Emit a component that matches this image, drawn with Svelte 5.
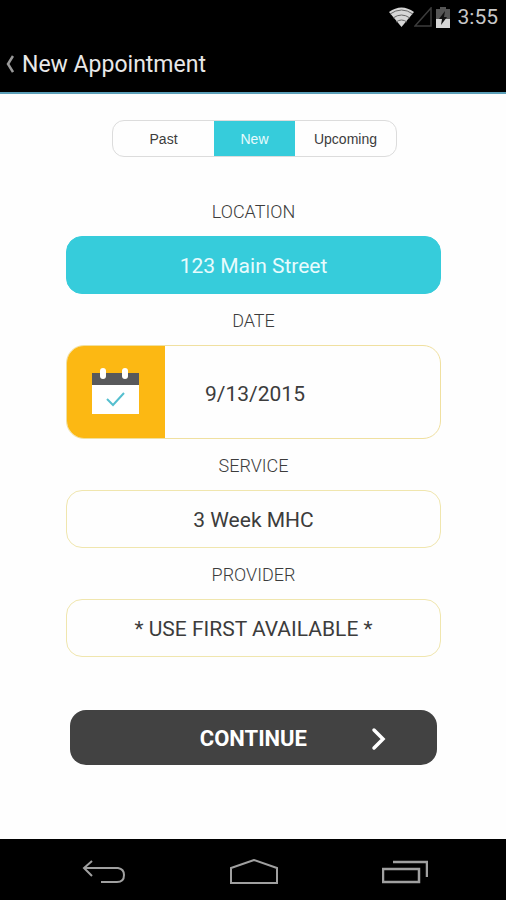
<script>
    const tabs = ["Past", "New", "Upcoming"]
    let activeTab = $state("New")
    let location = $state("123 Main Street")
    let date = $state("9/13/2015")
    let service = $state("3 Week MHC")
    let provider = $state("* USE FIRST AVAILABLE *")
</script>

<div class="screen">
    <div class="statusBar">
        <svg width="25" height="20" viewBox="0 0 25 20" aria-hidden="true">
            <path d="M0 5 Q12.5 -4 25 5 L12.5 20 Z" fill="#d6d6d6" />
            <path d="M1 7 Q12.5 -1 24 7 M4 11 Q12.5 5 21 11 M7 15 Q12.5 11 18 15" fill="none" stroke="#666" stroke-width="1" />
        </svg>
        <svg class="signal" width="18" height="20" viewBox="0 0 18 20" aria-hidden="true">
            <path d="M17 1 V19 H1 Z" fill="none" stroke="#3c3c3c" stroke-width="1.5" />
        </svg>
        <svg class="battery" width="14" height="21" viewBox="0 0 14 21" aria-hidden="true">
            <path d="M4 0 H10 V2 H14 V12 H0 V2 H4 Z" fill="#555" />
            <path d="M0 12 H14 V21 H0 Z" fill="#d6d6d6" />
            <path d="M9 4 L3 12 H6 L5 18 L11 10 H8 Z" fill="#111" />
        </svg>
        <span class="clock">3:55</span>
    </div>

    <header>
        <button class="back" aria-label="Back">
            <svg width="8" height="18" viewBox="0 0 8 18" aria-hidden="true">
                <path d="M7 1 L2 9 L7 17" fill="none" stroke="#999" stroke-width="2.5" />
            </svg>
        </button>
        <h1>New Appointment</h1>
    </header>

    <main>
        <nav class="tabs">
            {#each tabs as tab}
            <button class="tab" class:active={tab === activeTab} onclick={() => activeTab = tab}>{tab}</button>
            {/each}
        </nav>

        <form>
            <label for="location">LOCATION</label>
            <select id="location" class="field filled" bind:value={location}>
                <option>123 Main Street</option>
            </select>

            <label for="date">DATE</label>
            <div class="dateField">
                <div class="dateIcon">
                    <svg width="48" height="48" viewBox="0 0 48 48" aria-hidden="true">
                        <path d="M0 17 H47 V46 H0 Z" fill="#fff" />
                        <path d="M0 5 H47 V17 H0 Z" fill="#58595b" />
                        <rect x="8" y="0" width="6" height="11" rx="3" fill="#fff" />
                        <rect x="30" y="0" width="6" height="11" rx="3" fill="#fff" />
                        <path d="M15 31 L21 37 L32 25" fill="none" stroke="#55bfcf" stroke-width="2" />
                    </svg>
                </div>
                <input id="date" type="text" bind:value={date}>
            </div>

            <label for="service">SERVICE</label>
            <select id="service" class="field" bind:value={service}>
                <option>3 Week MHC</option>
            </select>

            <label for="provider">PROVIDER</label>
            <select id="provider" class="field" bind:value={provider}>
                <option>* USE FIRST AVAILABLE *</option>
            </select>

            <button type="button" class="continue">
                <span>CONTINUE</span>
                <svg width="16" height="24" viewBox="0 0 16 24" aria-hidden="true">
                    <path d="M3 3 L12 12 L3 21" fill="none" stroke="#fff" stroke-width="3.5" stroke-linecap="round" />
                </svg>
            </button>
        </form>
    </main>

    <footer>
        <button aria-label="Back">
            <svg width="44" height="26" viewBox="0 0 44 26" aria-hidden="true">
                <path d="M10 2 L2 9 L10 17 M2 9 H36 Q42 10 42 16 Q42 23 35 23 H19" fill="none" stroke="#a0a0a0" stroke-width="2" />
            </svg>
        </button>
        <button aria-label="Home">
            <svg width="48" height="26" viewBox="0 0 48 26" aria-hidden="true">
                <path d="M1 24 V9 L24 1 L47 9 V24 Z" fill="none" stroke="#a0a0a0" stroke-width="2" />
            </svg>
        </button>
        <button aria-label="Recent apps">
            <svg width="46" height="26" viewBox="0 0 46 26" aria-hidden="true">
                <path d="M1 10 H37 V23 H1 Z M11 3 H45 V18" fill="none" stroke="#a0a0a0" stroke-width="2.5" />
            </svg>
        </button>
    </footer>
</div>

<style>
    :global(body) {
        margin: 0;
    }
    .screen {
        display: flex;
        flex-flow: column;
        min-height: 100vh;
        background: #fefefe;
        font-family: Roboto, "Liberation Sans", sans-serif;
        color: #3c3c3c;
    }
    button, input, select {
        box-sizing: border-box;
        margin: 0;
        padding: 0;
        border: none;
        background: none;
        font-family: inherit;
        color: inherit;
    }
    svg {
        display: block;
        flex: none;
    }
    .statusBar {
        display: flex;
        justify-content: flex-end;
        align-items: center;
        height: 34px;
        padding-right: 8px;
        background: #000;
    }
    .battery {
        margin: 0 8px 0 4px;
    }
    .clock {
        font-size: 21px;
        color: #c8c8c8;
    }
    header {
        display: flex;
        align-items: center;
        gap: 8px;
        box-sizing: border-box;
        height: 60px;
        padding: 2px 0 0 6px;
        background: #000;
        border-bottom: 2px solid #5b9fb8;
    }
    h1 {
        margin: 0;
        font-size: 23px;
        font-weight: 400;
        color: #e8e8e8;
    }
    main {
        flex: 1;
        padding: 26px 65px 26px 66px;
    }
    .tabs {
        display: flex;
        height: 37px;
        box-sizing: border-box;
        margin: 0 44px 0 46px;
        border: 1px solid #dcdcdc;
        border-radius: 12px;
        overflow: hidden;
    }
    .tab {
        flex: 5;
        font-family: "Liberation Sans", sans-serif;
        font-size: 14px;
    }
    .tab.active {
        flex: 4;
        background: #36ccdb;
        color: #e8fbfd;
    }
    form {
        display: flex;
        flex-flow: column;
        padding-top: 28px;
    }
    label {
        padding-top: 2px;
        line-height: 49px;
        font-size: 18px;
        font-weight: 300;
        text-align: center;
    }
    .field {
        appearance: none;
        height: 58px;
        padding-top: 2px;
        border: 1px solid #f0e6ae;
        border-radius: 16px;
        font-size: 21px;
        text-align: center;
        text-align-last: center;
    }
    .field.filled {
        border-color: #36ccdb;
        background: #36ccdb;
        color: #e8fbfd;
    }
    .dateField {
        display: flex;
        height: 94px;
        box-sizing: border-box;
        border: 1px solid #f0e0a0;
        border-radius: 18px;
        overflow: hidden;
    }
    .dateIcon {
        display: flex;
        justify-content: center;
        align-items: center;
        width: 98px;
        background: #fcb813;
    }
    .dateField input {
        flex: 1;
        min-width: 0;
        padding: 4px 0 0 40px;
        font-size: 21px;
    }
    .continue {
        display: flex;
        justify-content: flex-end;
        align-items: center;
        gap: 64px;
        height: 55px;
        margin: 53px 4px 0;
        padding: 2px 50px 0 0;
        border-radius: 16px;
        background: #424242;
        color: #fff;
        font-size: 22px;
        font-weight: 700;
    }
    footer {
        display: flex;
        justify-content: space-between;
        align-items: center;
        height: 61px;
        padding: 4px 78px 0 82px;
        box-sizing: border-box;
        background: #000;
    }
</style>
